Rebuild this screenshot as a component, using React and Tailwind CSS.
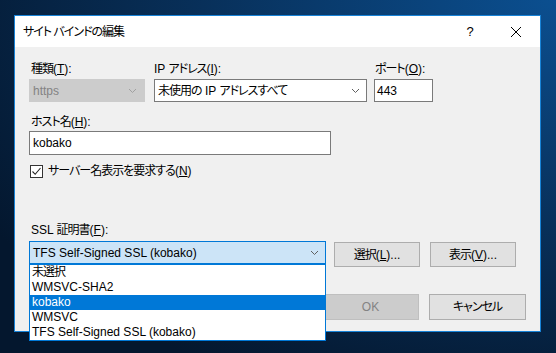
const Chevron = ({ color = "#606060" }) => (
  <svg width="9" height="6" viewBox="0 0 9 6" className="shrink-0">
    <path d="M1 1 L4.5 4.5 L8 1" fill="none" stroke={color} strokeWidth="1" />
  </svg>
);

// Japanese runs are set a little tighter to match Yu Gothic UI widths
const J = ({ children }) => <span className="tracking-[-1px]">{children}</span>;

const Btn = ({ children, disabled, className = "" }) => (
  <div
    className={
      "flex items-center justify-center border " +
      (disabled
        ? "bg-[#cccccc] border-[#bfbfbf] text-[#838383] "
        : "bg-[#e1e1e1] border-[#adadad] text-black ") +
      className
    }
  >
    {children}
  </div>
);

const certs = [
  { id: "none", label: <J>未選択</J> },
  { id: "sha2", label: "WMSVC-SHA2" },
  { id: "kobako", label: "kobako" },
  { id: "wmsvc", label: "WMSVC" },
  { id: "tfs", label: "TFS Self-Signed SSL (kobako)" },
];

export default function App() {
  return (
    <div
      className="relative w-[556px] h-[353px] overflow-hidden bg-[radial-gradient(ellipse_at_top_right,#0b4f90_0%,#08305a_45%,#04172e_85%)] text-[12px] text-black [font-feature-settings:'palt']"
      style={{ fontFamily: '"Liberation Sans", "Noto Sans CJK JP", sans-serif' }}
    >
      {/* dialog window */}
      <div className="absolute left-[14px] top-[15px] w-[527px] h-[317px] border border-[#1883d7] bg-[#f0f0f0] flex flex-col">
        {/* title bar */}
        <div className="h-[31px] bg-white flex items-center pl-[8px] shrink-0">
          <span className="flex-1 leading-none">
            <J>サイト バインドの編集</J>
          </span>
          <span className="w-[46px] text-center text-[13px] leading-none">?</span>
          <div className="w-[46px] flex justify-center mr-[1px]">
            <svg width="10" height="10" viewBox="0 0 10 10">
              <path d="M0 0 L10 10 M10 0 L0 10" stroke="#000" strokeWidth="1" />
            </svg>
          </div>
        </div>

        {/* body */}
        <div className="flex-1 flex flex-col pl-[14px] pr-[14px] pt-[14px]">
          {/* row 1 */}
          <div className="flex">
            <div className="flex flex-col w-[116px]">
              <div className="h-[16px] leading-[16px] pl-[2px]">
                <J>種類</J>(<span className="underline">T</span>):
              </div>
              <div className="mt-[2px] h-[23px] bg-[#cccccc] border border-[#cccccc] flex items-center pl-[3px] pr-[7px] text-[#838383]">
                <span className="flex-1">https</span>
                <Chevron color="#a0a0a0" />
              </div>
            </div>
            <div className="flex flex-col w-[213px] ml-[9px]">
              <div className="h-[16px] leading-[16px]">
                IP <J>アドレス</J>(<span className="underline">I</span>):
              </div>
              <div className="mt-[2px] h-[23px] bg-white border border-[#7a7a7a] flex items-center pl-[3px] pr-[6px]">
                <span className="flex-1 whitespace-nowrap">
                  <J>未使用の</J> IP <J>アドレスすべて</J>
                </span>
                <Chevron />
              </div>
            </div>
            <div className="flex flex-col w-[59px] ml-[7px]">
              <div className="h-[16px] leading-[16px] pl-[1px]">
                <J>ポート</J>(<span className="underline">O</span>):
              </div>
              <div className="mt-[2px] h-[23px] bg-white border border-[#7a7a7a] flex items-center pl-[2px]">
                443
              </div>
            </div>
          </div>

          {/* host name */}
          <div className="mt-[12px] h-[16px] leading-[16px] pl-[2px]">
            <J>ホスト名</J>(<span className="underline">H</span>):
          </div>
          <div className="mt-[1px] w-[302px] h-[24px] bg-white border border-[#7a7a7a] flex items-center pl-[3px]">
            kobako
          </div>

          {/* SNI checkbox */}
          <div className="mt-[8px] flex items-center ml-[1px]">
            <div className="w-[13px] h-[13px] border border-[#333333] bg-white flex items-center justify-center">
              <svg width="11" height="11" viewBox="0 0 11 11">
                <path d="M1.5 5.5 L4.2 8.3 L9.5 2" fill="none" stroke="#222" strokeWidth="1.1" />
              </svg>
            </div>
            <span className="ml-[5px] leading-[16px]">
              <J>サーバー名表示を要求する</J>(<span className="underline">N</span>)
            </span>
          </div>

          {/* SSL certificate */}
          <div className="mt-[43px] h-[16px] leading-[16px] pl-[2px]">
            SSL <J>証明書</J>(<span className="underline">F</span>):
          </div>
          <div className="mt-[3px] flex items-start">
            <div className="relative w-[297px]">
              <div className="h-[23px] bg-[#cce4f7] border border-[#0078d7] flex items-center pl-[3px] pr-[6px]">
                <span className="flex-1 whitespace-nowrap">TFS Self-Signed SSL (kobako)</span>
                <Chevron />
              </div>
              {/* open list */}
              <div className="absolute left-0 top-full z-10 w-full bg-white border border-[#0078d7] flex flex-col">
                {certs.map((c) => (
                  <div
                    key={c.id}
                    className={
                      "h-[15px] leading-[15px] pl-[2px] whitespace-nowrap overflow-hidden " +
                      (c.id === "kobako" ? "bg-[#0078d7] text-white" : "")
                    }
                  >
                    {c.label}
                  </div>
                ))}
              </div>
            </div>
            <Btn className="mt-[1px] ml-[8px] w-[86px] h-[25px]">
              <J>選択</J>(<span className="underline">L</span>)...
            </Btn>
            <Btn className="mt-[1px] ml-[10px] w-[86px] h-[25px]">
              <J>表示</J>(<span className="underline">V</span>)...
            </Btn>
          </div>

          {/* bottom buttons */}
          <div className="mt-[27px] flex justify-end gap-[10px]">
            <Btn disabled className="w-[97px] h-[26px]">OK</Btn>
            <Btn className="w-[97px] h-[26px]">
              <J>キャンセル</J>
            </Btn>
          </div>
        </div>
      </div>
    </div>
  );
}
